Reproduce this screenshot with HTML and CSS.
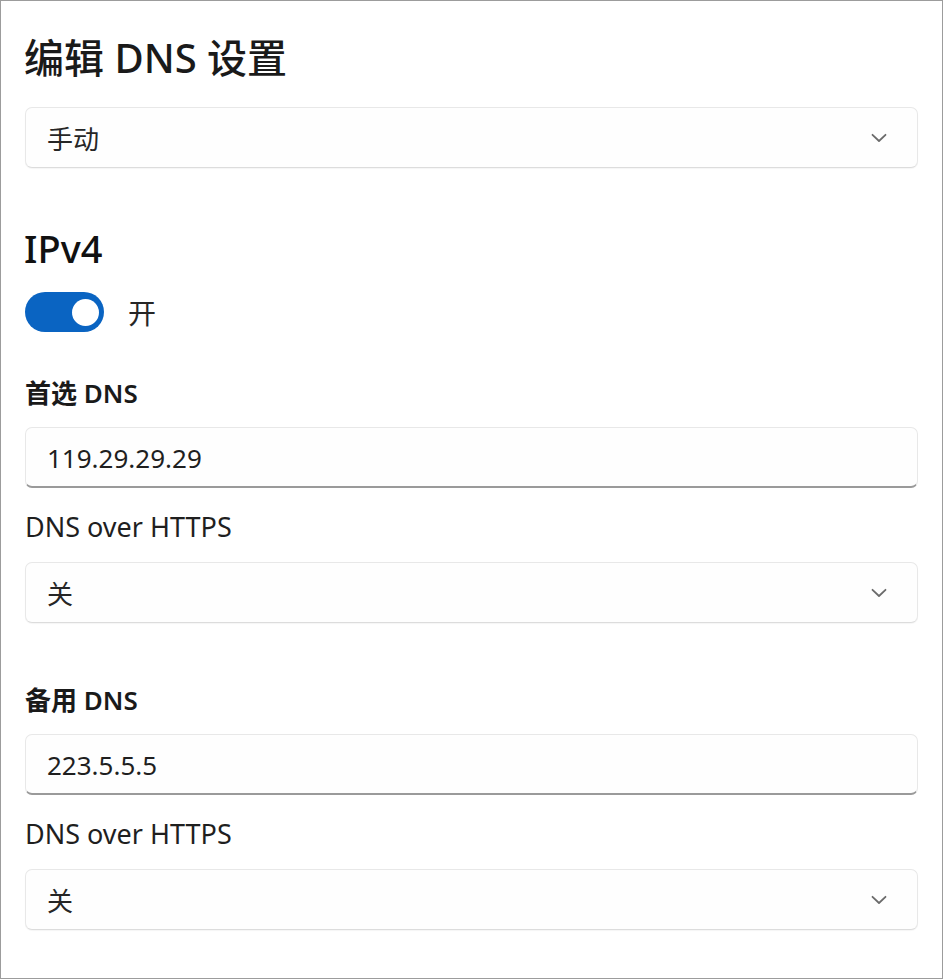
FILE: index.html
```html
<!DOCTYPE html>
<html lang="zh-CN">
<head>
<meta charset="utf-8">
<title>编辑 DNS 设置</title>
<link rel="stylesheet" href="styles.css">
</head>
<body>
<div class="frame">
  <h1 class="title">编辑 DNS 设置</h1>
  <div class="select first">
    <span class="value">手动</span>
    <svg class="chevron" width="16" height="10" viewBox="0 0 16 10"><path d="M1.5 1.8 L8 8 L14.5 1.8" fill="none" stroke="#6b6b6b" stroke-width="1.8" stroke-linecap="round" stroke-linejoin="round"/></svg>
  </div>

  <h2 class="section">IPv4</h2>
  <div class="toggle-row">
    <span class="toggle"><span class="knob"></span></span>
    <span class="toggle-label">开</span>
  </div>

  <div class="label label-1">首选 DNS</div>
  <div class="input">119.29.29.29</div>
  <div class="sublabel">DNS over HTTPS</div>
  <div class="select">
    <span class="value">关</span>
    <svg class="chevron" width="16" height="10" viewBox="0 0 16 10"><path d="M1.5 1.8 L8 8 L14.5 1.8" fill="none" stroke="#6b6b6b" stroke-width="1.8" stroke-linecap="round" stroke-linejoin="round"/></svg>
  </div>

  <div class="label label-2">备用 DNS</div>
  <div class="input">223.5.5.5</div>
  <div class="sublabel">DNS over HTTPS</div>
  <div class="select">
    <span class="value">关</span>
    <svg class="chevron" width="16" height="10" viewBox="0 0 16 10"><path d="M1.5 1.8 L8 8 L14.5 1.8" fill="none" stroke="#6b6b6b" stroke-width="1.8" stroke-linecap="round" stroke-linejoin="round"/></svg>
  </div>
</div>
</body>
</html>
```

FILE: styles.css
```css
html, body {
  margin: 0;
  padding: 0;
  background: #ffffff;
}

body {
  font-family: "Noto Sans", "Noto Sans CJK SC", sans-serif;
  color: #1b1b1b;
}

.frame {
  box-sizing: border-box;
  width: 943px;
  height: 979px;
  border: 1px solid #9c9c9c;
  padding: 33px 24px 0 24px;
  display: flex;
  flex-direction: column;
  background: #fff;
}

.title {
  margin: 0 0 0 -1px;
  font-size: 40px;
  line-height: 48px;
  font-weight: 500;
  color: #1a1a1a;
}

.select,
.input {
  box-sizing: border-box;
  height: 61px;
  border: 1px solid #e8e8e8;
  border-radius: 7px;
  background: #fefefe;
  display: flex;
  align-items: center;
  padding: 0 21px;
  font-size: 26px;
  color: #262626;
}

.select {
  justify-content: space-between;
  border-bottom-color: #dcdcdc;
  box-shadow: 0 1px 1px rgba(0, 0, 0, 0.04);
}

.select.first {
  margin-top: 25px;
}

.chevron {
  margin-right: 9px;
}

.input {
  border-bottom: 2px solid #9a9a9a;
  padding-top: 1px;
  color: #1f1f1f;
}

.section {
  margin: 56px 0 0 -1px;
  font-size: 38px;
  line-height: 48px;
  font-weight: 500;
  color: #111;
}

.toggle-row {
  margin-top: 20px;
  display: flex;
  align-items: center;
  gap: 24px;
  height: 40px;
}

.toggle {
  box-sizing: border-box;
  width: 79px;
  height: 40px;
  border-radius: 20px;
  background: #0a64c2;
  display: flex;
  align-items: center;
  justify-content: flex-end;
  padding-right: 5px;
}

.knob {
  width: 27px;
  height: 27px;
  border-radius: 50%;
  background: #ffffff;
}

.toggle-label {
  font-size: 28px;
  color: #262626;
}

.label {
  font-size: 26px;
  line-height: 34px;
  font-weight: 600;
  color: #1a1a1a;
  margin-bottom: 17px;
}

.label-1 {
  margin-top: 44px;
}

.label-2 {
  margin-top: 60px;
}

.sublabel {
  font-size: 27px;
  line-height: 34px;
  color: #1f1f1f;
  margin: 22px 0 18px;
}
```
